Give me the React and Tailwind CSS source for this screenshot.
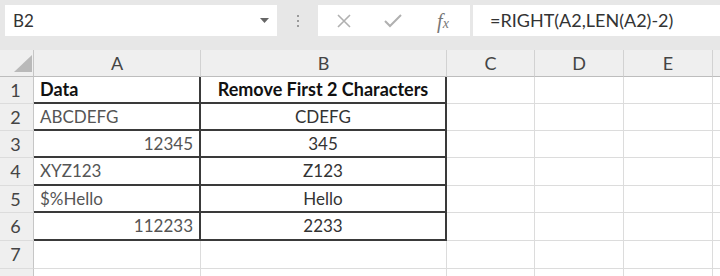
import React from "react";

const cols = ["A", "B", "C", "D", "E"];
const rows = [
  { a: "Data", aAlign: "left", aBold: true, b: "Remove First 2 Characters", bBold: true },
  { a: "ABCDEFG", aAlign: "left", b: "CDEFG" },
  { a: "12345", aAlign: "right", b: "345" },
  { a: "XYZ123", aAlign: "left", b: "Z123" },
  { a: "$%Hello", aAlign: "left", b: "Hello" },
  { a: "112233", aAlign: "right", b: "2233" },
  { a: "", b: "", empty: true },
  { a: "", b: "", empty: true, noLabel: true },
];

function RowHead({ n }) {
  return (
    <div className="bg-[#efefef] border-r border-r-[#c6c6c6] border-b border-b-[#dcdcdc] flex items-center justify-center text-[18px] text-[#444] pr-[2px]">
      {n}
    </div>
  );
}

export default function App() {
  return (
    <div
      className="w-[720px] h-[276px] bg-[#e7e7e7] overflow-hidden flex flex-col"
      style={{ fontFamily: "Lato, 'Open Sans', sans-serif" }}
    >
      {/* formula bar */}
      <div className="shrink-0 flex h-[31px] mt-[5px] pl-[5px] items-stretch">
        <div className="w-[272px] bg-white flex items-center justify-between pl-[8px] pr-[8px]">
          <span className="text-[17px] text-[#333]">B2</span>
          <svg width="9" height="5" viewBox="0 0 9 5">
            <path d="M0 0 L9 0 L4.5 5 Z" fill="#666" />
          </svg>
        </div>
        <div className="w-[41px] flex items-center justify-center">
          <div className="flex flex-col gap-[3px]">
            <div className="w-[2px] h-[2px] bg-[#9a9a9a]" />
            <div className="w-[2px] h-[2px] bg-[#9a9a9a]" />
            <div className="w-[2px] h-[2px] bg-[#9a9a9a]" />
          </div>
        </div>
        <div className="w-[152px] bg-white flex items-center">
          <div className="w-[52px] flex justify-center">
            <svg width="16" height="16" viewBox="0 0 16 16">
              <path d="M2 2 L14 14 M14 2 L2 14" stroke="#b0b0b0" strokeWidth="1.6" fill="none" />
            </svg>
          </div>
          <div className="w-[46px] flex justify-center">
            <svg width="18" height="14" viewBox="0 0 18 14">
              <path d="M1 7 L6 12 L17 1" stroke="#b0b0b0" strokeWidth="2" fill="none" />
            </svg>
          </div>
          <div className="flex-1 flex justify-center">
            <span
              className="text-[20px] italic text-[#777] leading-none"
              style={{ fontFamily: "'Liberation Serif', serif" }}
            >
              f<span className="text-[14px]">x</span>
            </span>
          </div>
        </div>
        <div className="w-[3px]" />
        <div className="flex-1 bg-white flex items-center pl-[17px]">
          <span className="text-[18px] text-[#333]">=RIGHT(A2,LEN(A2)-2)</span>
        </div>
      </div>

      {/* grid */}
      <div className="shrink-0 mt-[14px] grid grid-cols-[34px_167px_246px_88px_89px_89px_7px] grid-rows-[27px_27px_27px_27px_28px_27px_28px_28px_27px]">
        {/* header row */}
        <div className="bg-[#efefef] border-r border-r-[#c6c6c6] border-b border-b-[#bdbdbd] relative">
          <svg className="absolute left-[14px] top-[5px]" width="18" height="17" viewBox="0 0 18 17">
            <path d="M18 0 L18 17 L0 17 Z" fill="#b9b9b9" />
          </svg>
        </div>
        {cols.map((c) => (
          <div
            key={c}
            className="bg-[#efefef] border-r border-r-[#d2d2d2] border-b border-b-[#bdbdbd] flex items-center justify-center text-[18px] text-[#444]"
          >
            {c}
          </div>
        ))}
        <div className="bg-[#efefef] border-b border-b-[#bdbdbd]" />

        {rows.map((r, i) => {
          const dataRow = !r.empty;
          return (
            <React.Fragment key={i}>
              <RowHead n={r.noLabel ? "" : i + 1} />
              <div
                className={
                  (dataRow
                    ? "border-b-2 border-b-[#3a3a3a] border-r-2 border-r-[#3a3a3a] "
                    : "border-b border-b-[#dcdcdc] border-r border-r-[#dcdcdc] ") +
                  "bg-white flex items-center px-[6px] " +
                  (r.aAlign === "right" ? "justify-end " : "justify-start ") +
                  (r.aBold ? "font-bold text-[#111] text-[18px]" : "text-[#555] text-[17px]")
                }
              >
                {r.a}
              </div>
              <div
                className={
                  (dataRow
                    ? "border-b-2 border-b-[#3a3a3a] border-r-2 border-r-[#3a3a3a] "
                    : "border-b border-b-[#dcdcdc] border-r border-r-[#dcdcdc] ") +
                  "bg-white flex items-center justify-center " +
                  (r.bBold ? "font-bold text-[#111] text-[18px]" : "text-[#333] text-[17px]")
                }
              >
                {r.b}
              </div>
              <div className="bg-white border-r border-r-[#dcdcdc] border-b border-b-[#dcdcdc]" />
              <div className="bg-white border-r border-r-[#dcdcdc] border-b border-b-[#dcdcdc]" />
              <div className="bg-white border-r border-r-[#dcdcdc] border-b border-b-[#dcdcdc]" />
              <div className="bg-white border-b border-b-[#dcdcdc]" />
            </React.Fragment>
          );
        })}
      </div>
    </div>
  );
}
